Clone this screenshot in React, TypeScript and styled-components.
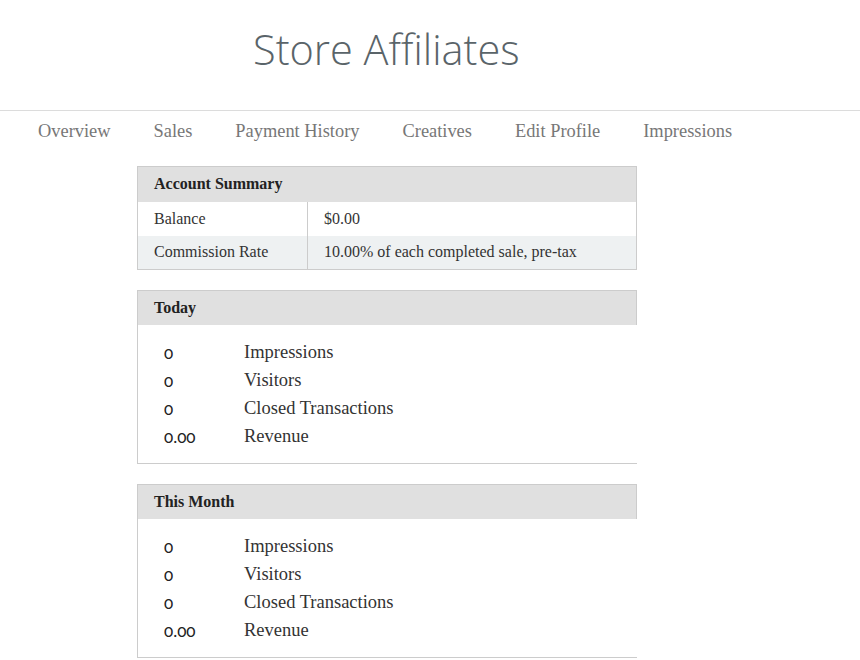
import React from "react";
import styled, { createGlobalStyle } from "styled-components";

const Global = createGlobalStyle`
  html, body { margin: 0; padding: 0; background: #fff; }
  body { font-family: "Liberation Serif", "DejaVu Serif", serif; color: #333; }
`;

const Page = styled.div`
  width: 860px;
  min-height: 660px;
`;

const Masthead = styled.header`
  height: 111px;
  border-bottom: 1px solid #dcdcdc;
  box-sizing: border-box;
  padding: 25px 0 0 253px;
`;

const Title = styled.h1`
  margin: 0;
  font-family: "Open Sans", "Noto Sans", sans-serif;
  font-weight: 300;
  font-size: 41.5px;
  line-height: 48px;
  color: #5a6469;
`;

const Nav = styled.nav`
  display: flex;
  gap: 43px;
  padding: 8px 0 0 38px;
  height: 45px;
  box-sizing: border-box;
`;

const NavItem = styled.a`
  font-size: 18.4px;
  line-height: 24px;
  color: #777;
  text-decoration: none;
`;

const Content = styled.main`
  padding: 10px 0 0 137px;
  display: flex;
  flex-direction: column;
  gap: 20px;
`;

const SummaryTable = styled.table`
  width: 500px;
  border-collapse: collapse;
  border: 1px solid #ccc;
  font-size: 16px;
`;

const HeadCell = styled.th`
  background: #e0e0e0;
  text-align: left;
  font-weight: bold;
  color: #222;
  height: 35px;
  padding: 0 16px;
  box-sizing: border-box;
`;

const Row = styled.tr<{ $alt?: boolean }>`
  background: ${(p) => (p.$alt ? "#eef1f2" : "#fff")};
  height: 34px;
`;

const Cell = styled.td<{ $first?: boolean }>`
  padding: 0 16px;
  width: ${(p) => (p.$first ? "137px" : "auto")};
  border-right: ${(p) => (p.$first ? "1px solid #ccc" : "none")};
  color: #333;
`;

const Panel = styled.section`
  width: 499px;
  border-left: 1px solid #ccc;
  border-bottom: 1px solid #ccc;
`;

const PanelHead = styled.h2`
  margin: 0;
  height: 35px;
  line-height: 33px;
  box-sizing: border-box;
  border-top: 1px solid #ccc;
  border-right: 1px solid #ccc;
  background: #e0e0e0;
  padding: 0 16px;
  font-size: 16px;
  font-weight: bold;
  color: #222;
`;

const StatList = styled.div`
  margin: 0;
  padding: 13px 0 13px 26px;
  display: grid;
  grid-template-columns: 80px 1fr;
  grid-auto-rows: 28px;
  align-items: center;
  font-size: 18.5px;
  color: #333;
`;

const StatValue = styled.span`
  font-family: "Lato", "Open Sans", sans-serif;
  font-variant-numeric: oldstyle-nums;
  font-size: 17px;
  color: #222;
`;

const StatLabel = styled.span``;

const stats = [
  ["0", "Impressions"],
  ["0", "Visitors"],
  ["0", "Closed Transactions"],
  ["0.00", "Revenue"],
];

function StatsPanel({ title }: { title: string }) {
  return (
    <Panel>
      <PanelHead>{title}</PanelHead>
      <StatList>
        {stats.map(([v, l]) => (
          <React.Fragment key={l}>
            <StatValue>{v}</StatValue>
            <StatLabel>{l}</StatLabel>
          </React.Fragment>
        ))}
      </StatList>
    </Panel>
  );
}

export default function App() {
  const nav = ["Overview", "Sales", "Payment History", "Creatives", "Edit Profile", "Impressions"];
  return (
    <Page>
      <Global />
      <Masthead>
        <Title>Store Affiliates</Title>
      </Masthead>
      <Nav>
        {nav.map((n) => (
          <NavItem key={n} href="#">{n}</NavItem>
        ))}
      </Nav>
      <Content>
        <SummaryTable>
          <thead>
            <tr>
              <HeadCell colSpan={2}>Account Summary</HeadCell>
            </tr>
          </thead>
          <tbody>
            <Row>
              <Cell $first>Balance</Cell>
              <Cell>$0.00</Cell>
            </Row>
            <Row $alt>
              <Cell $first>Commission Rate</Cell>
              <Cell>10.00% of each completed sale, pre-tax</Cell>
            </Row>
          </tbody>
        </SummaryTable>
        <StatsPanel title="Today" />
        <StatsPanel title="This Month" />
      </Content>
    </Page>
  );
}
